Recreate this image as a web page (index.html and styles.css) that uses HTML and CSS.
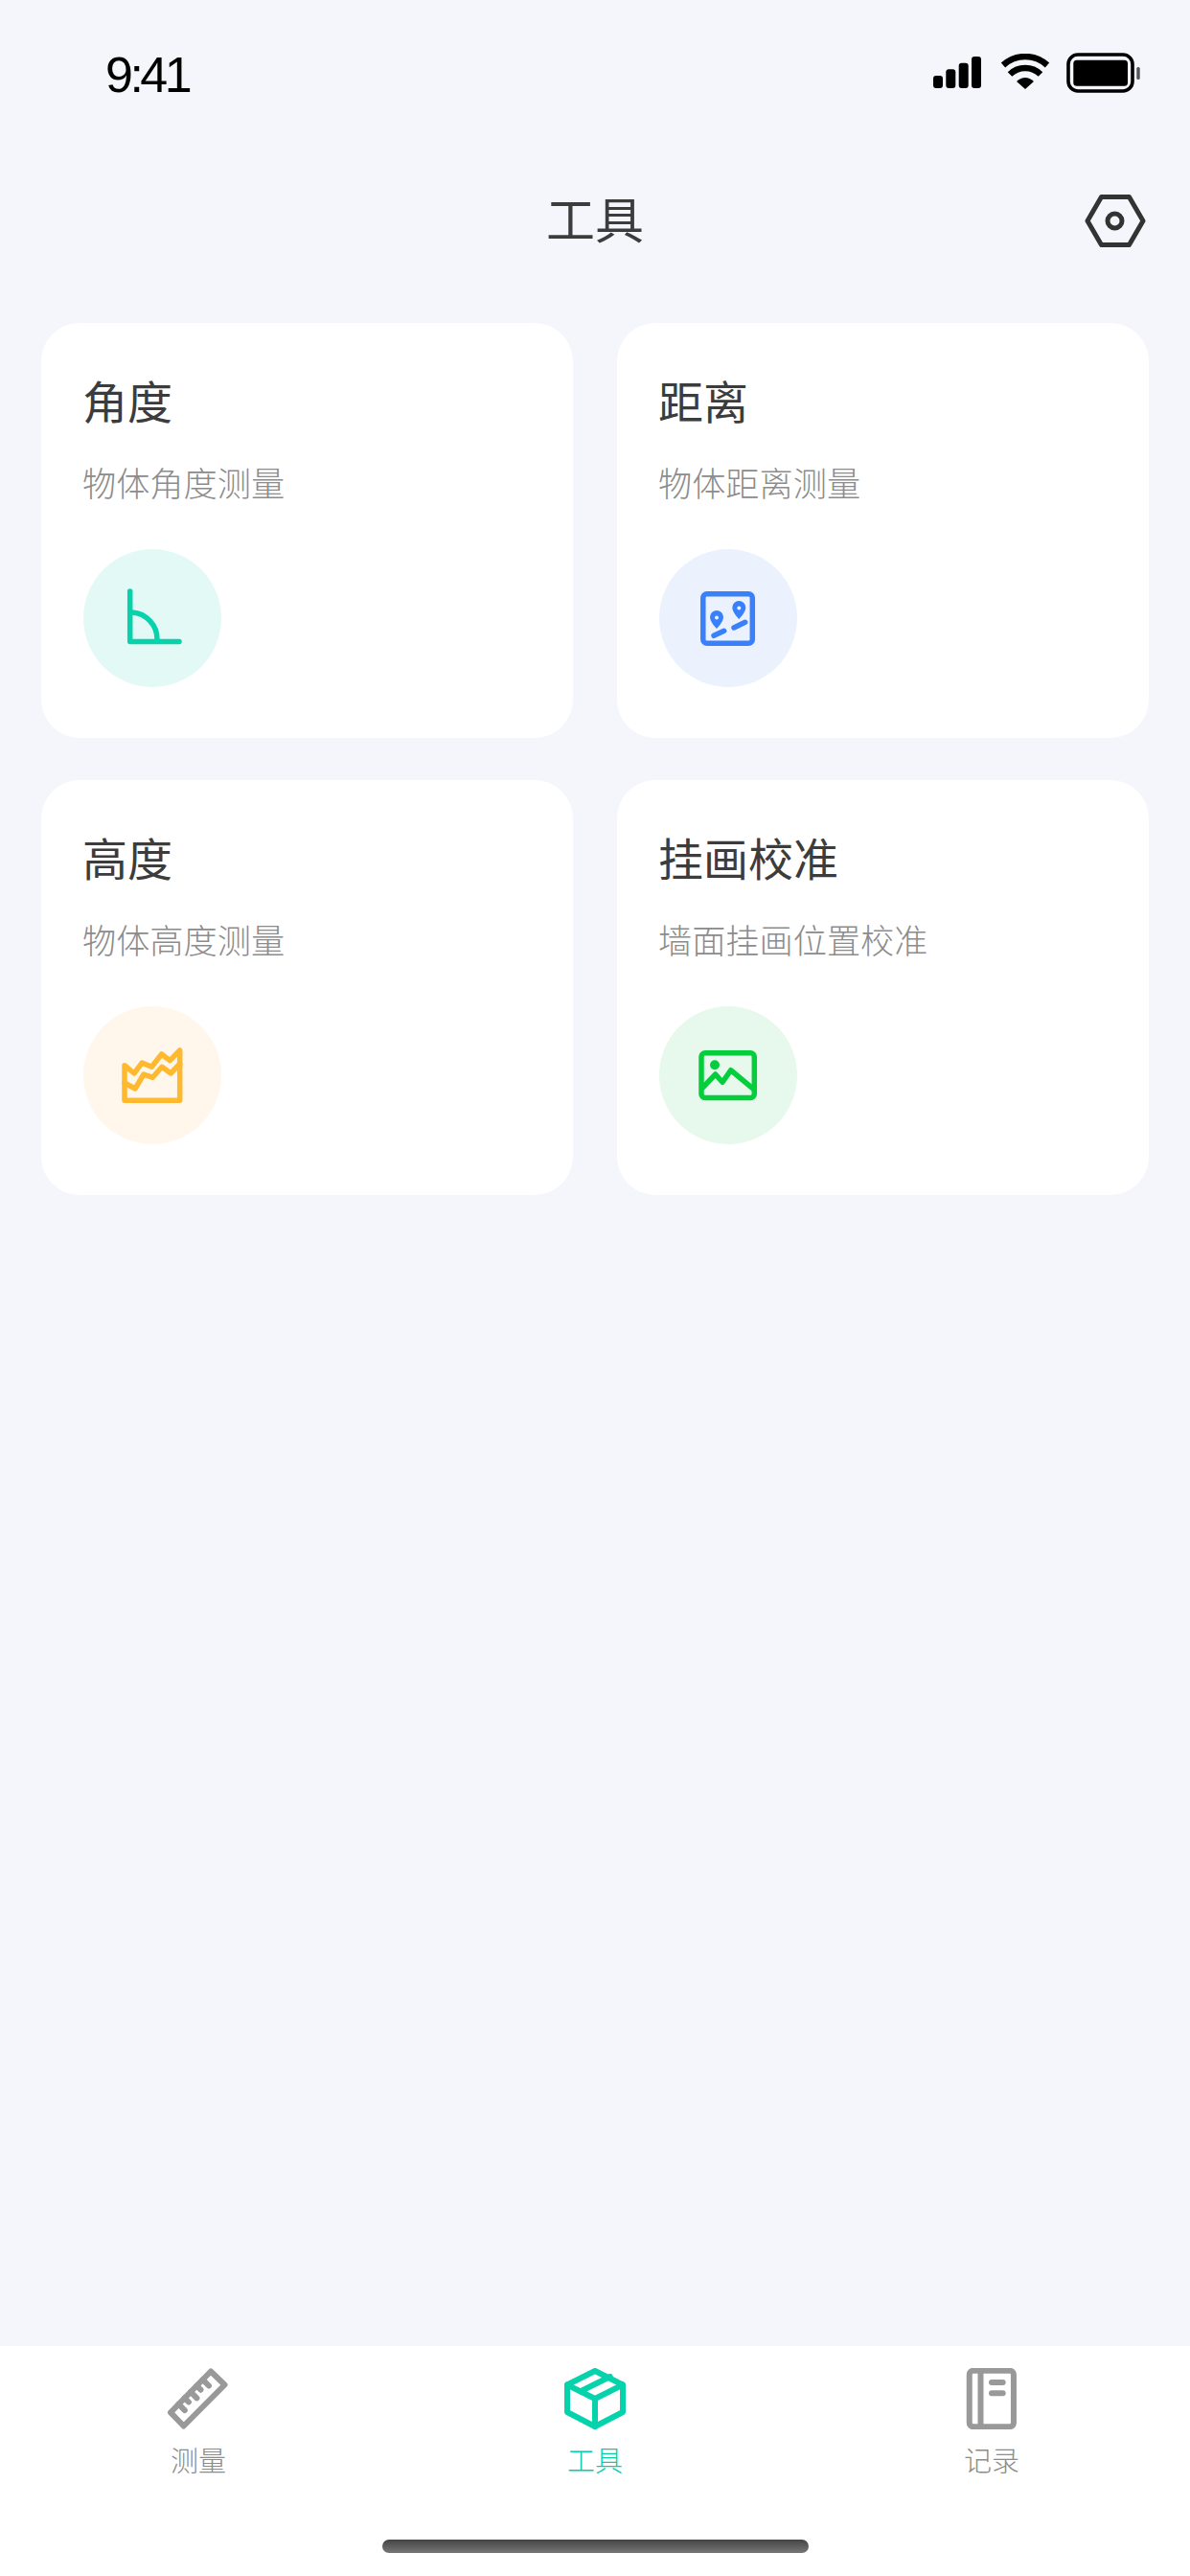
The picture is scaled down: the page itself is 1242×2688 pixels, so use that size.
FILE: index.html
```html
<!DOCTYPE html>
<html lang="zh-CN">
<head>
<meta charset="utf-8">
<title>工具</title>
<link rel="stylesheet" href="styles.css">
</head>
<body>
<div class="app">
  <header class="status">
    <span class="time">9:41</span>
    <div class="status-icons">
      <svg class="sig" viewBox="0 0 50 33"><rect x="0" y="20" width="10" height="13" rx="3"/><rect x="13.3" y="13.3" width="10" height="19.7" rx="3"/><rect x="26.7" y="6.7" width="10" height="26.3" rx="3"/><rect x="40" y="0" width="10" height="33" rx="3"/></svg>
      <svg class="wifi" viewBox="0 0 52 37"><path class="wifi-arc" d="M3 12A34 34 0 0 1 49 12"/><path class="wifi-arc" d="M10 21.5A23 23 0 0 1 42 21.5"/><path d="M17 29Q26 21 35 29L26 37Z"/></svg>
      <svg class="batt" viewBox="0 0 77 42"><rect class="batt-shell" x="2" y="2" width="67" height="38" rx="10"/><rect x="7.3" y="7.7" width="56.7" height="27" rx="3.5"/><rect class="batt-nub" x="73.3" y="15" width="3.4" height="13" rx="1.5"/></svg>
    </div>
  </header>

  <nav class="nav">
    <span></span>
    <h1 class="nav-title">工具</h1>
    <svg class="gear" viewBox="0 0 64 55"><path d="M3 27.5 17.5 2.5H46.5L61 27.5 46.5 52.5H17.5Z"/><circle cx="31.5" cy="27.5" r="7.5"/></svg>
  </nav>

  <main class="grid">
    <section class="card">
      <h2 class="card-title">角度</h2>
      <p class="card-sub">物体角度测量</p>
      <div class="badge badge-teal">
        <svg class="badge-icon" viewBox="0 0 144 144"><path d="M48.7 44V96.5H100"/><path d="M51 66A28 28 0 0 1 77 94"/></svg>
      </div>
    </section>
    <section class="card">
      <h2 class="card-title">距离</h2>
      <p class="card-sub">物体距离测量</p>
      <div class="badge badge-blue">
        <svg class="badge-icon" viewBox="0 0 144 144">
          <rect x="45.8" y="46.8" width="51.5" height="51.5" rx="4"/>
          <path class="pin" d="M60 64a7 7 0 0 1 7 7c0 5-7 12-7 12s-7-7-7-12a7 7 0 0 1 7-7zm0 5.500a2 2 0 1 0 0 4 2 2 0 0 0 0-4z"/>
          <path class="pin" d="M83.300 54a7 7 0 0 1 7 7c0 5-7 12-7 12s-7-7-7-12a7 7 0 0 1 7-7zm0 5.500a2 2 0 1 0 0 4 2 2 0 0 0 0-4z"/>
          <path d="M57 90.300 67.700 85.300M78 82 89.700 76.300"/>
        </svg>
      </div>
    </section>
    <section class="card">
      <h2 class="card-title">高度</h2>
      <p class="card-sub">物体高度测量</p>
      <div class="badge badge-yellow">
        <svg class="badge-icon" viewBox="0 0 144 144">
          <path d="M43 61.700 53 70 61.300 59 71.300 63.300 81.700 50 90.300 56.700 100.700 46V98.300H43Z"/>
          <path d="M43 80 54 86 63 71 72.300 74.300 82 63.300 91.300 70 100.700 60"/>
        </svg>
      </div>
    </section>
    <section class="card">
      <h2 class="card-title">挂画校准</h2>
      <p class="card-sub">墙面挂画位置校准</p>
      <div class="badge badge-green">
        <svg class="badge-icon" viewBox="0 0 144 144">
          <rect x="44" y="48.800" width="55.300" height="46.800" rx="4"/>
          <circle class="dot" cx="58" cy="61.300" r="5"/>
          <path d="M45.300 85 58.700 71 66 79.300 74.700 66.700 98.700 86.700"/>
        </svg>
      </div>
    </section>
  </main>

  <footer class="tabbar">
    <div class="tabs">
      <div class="tab">
        <svg class="tab-icon" viewBox="0 0 64 64">
          <path d="M45 3.500 59.500 17.500 16.700 60.500 3 46.300Z"/>
          <path d="M11.400 37.700 17.800 44.100M17.700 31.300 21.900 35.500M24 24.900 30.400 31.300M30.300 18.500 34.500 22.700M36.600 12.100 43 18.500"/>
        </svg>
        <span class="tab-label">测量</span>
      </div>
      <div class="tab tab-active">
        <svg class="tab-icon" viewBox="0 0 64 64">
          <path d="M32 3 61 17.500V46L32 61 3 46V17.500Z"/>
          <path d="M3 17.500 32 32 61 17.500M32 32V61M47.700 9 16.500 24.500"/>
        </svg>
        <span class="tab-label">工具</span>
      </div>
      <div class="tab">
        <svg class="tab-icon" viewBox="0 0 64 64">
          <rect x="8.750" y="2.750" width="46.200" height="58.500" rx="4"/>
          <path d="M20.500 3V61M32 15H43.700M32 26.300H43.700"/>
        </svg>
        <span class="tab-label">记录</span>
      </div>
    </div>
    <div class="home-bar"></div>
  </footer>
</div>
</body>
</html>
```
FILE: styles.css
```css
* { box-sizing: border-box; }
html, body { margin: 0; padding: 0; }
body {
  background: #f5f6fb;
  font-family: "Noto Sans CJK SC", "Liberation Sans", sans-serif;
}
.app {
  width: 1242px;
  height: 2688px;
  display: flex;
  flex-direction: column;
  overflow: hidden;
}

/* status bar */
.status {
  height: 132px;
  padding: 55px 52px 0 110px;
  display: flex;
  justify-content: space-between;
  align-items: flex-start;
}
.time {
  font-family: "Liberation Sans", sans-serif;
  font-size: 52px;
  line-height: 46px;
  letter-spacing: -3.5px;
  color: #000;
}
.status-icons {
  display: flex;
  align-items: flex-start;
}
.sig { width: 50px; height: 33px; margin: 4px 20px 0 0; }
.wifi { width: 52px; height: 37px; margin: 1px 17px 0 0; }
.batt { width: 77px; height: 42px; }
.wifi-arc { fill: none; stroke: #000; stroke-width: 6.5; }
.batt-shell { fill: none; stroke: #000; stroke-width: 3.6; }
.batt-nub { fill: #555; }

/* nav */
.nav {
  height: 196px;
  margin-bottom: 9px;
  padding: 0 46px;
  display: grid;
  grid-template-columns: 1fr auto 1fr;
  align-items: center;
}
.nav-title {
  margin: 0 0 6px;
  font-size: 51px;
  line-height: 70px;
  font-weight: 400;
  color: #3c3c3c;
}
.gear {
  width: 64px;
  height: 55px;
  justify-self: end;
  fill: none;
  stroke: #333;
  stroke-width: 5;
  stroke-linejoin: round;
}

/* cards */
.grid {
  padding: 0 44px 0 43px;
  display: grid;
  grid-template-columns: 555px 555px;
  column-gap: 46px;
  row-gap: 44px;
  flex: 1;
  align-content: start;
}
.card {
  background: #fff;
  border-radius: 40px;
  padding: 51px 44px 53px;
}
.card-title {
  margin: 0 0 0 -1px;
  font-size: 47px;
  line-height: 58px;
  font-weight: 400;
  color: #3c3c3c;
}
.card-sub {
  margin: 32px 0 45px -1px;
  font-size: 35.200px;
  line-height: 50px;
  font-weight: 300;
  color: #8c8c8c;
}
.badge {
  width: 144px;
  height: 144px;
  border-radius: 50%;
}
.badge-icon {
  display: block;
  width: 144px;
  height: 144px;
  fill: none;
  stroke-width: 5.500;
  stroke-linecap: round;
  stroke-linejoin: round;
}
.badge-teal { background: #e3f9f6; }
.badge-teal .badge-icon { stroke: #06d3ac; }
.badge-blue { background: #ebf2fe; }
.badge-blue .badge-icon { stroke: #3a80fa; }
.badge-yellow { background: #fff7eb; }
.badge-yellow .badge-icon { stroke: #ffb92e; }
.badge-green { background: #e6f9ec; }
.badge-green .badge-icon { stroke: #05ce3c; }
.pin { fill: #3a80fa; fill-rule: evenodd; stroke: none; }
.dot { fill: #05ce3c; stroke: none; }

/* tab bar */
.tabbar {
  height: 240px;
  background: #fff;
  display: flex;
  flex-direction: column;
  align-items: center;
}
.tabs {
  width: 100%;
  padding-top: 23px;
  display: grid;
  grid-template-columns: repeat(3, 1fr);
}
.tab {
  display: flex;
  flex-direction: column;
  align-items: center;
  color: #8c8c8c;
}
.tab-icon {
  width: 64px;
  height: 64px;
  fill: none;
  stroke: #999;
  stroke-width: 6;
  stroke-linecap: round;
  stroke-linejoin: round;
}
.tab-active { color: #06cfa8; }
.tab-active .tab-icon { stroke: #06d3ac; }
.tab-label {
  margin-top: 11px;
  font-size: 29px;
  line-height: 40px;
  font-weight: 300;
}
.home-bar {
  width: 445px;
  height: 14px;
  margin-top: 64px;
  border-radius: 7px;
  background: linear-gradient(#444, #777);
}
```
